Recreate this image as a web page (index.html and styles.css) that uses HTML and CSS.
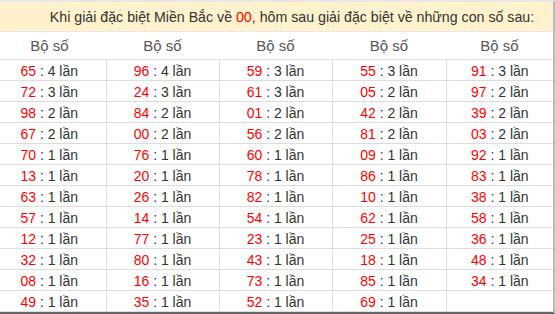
FILE: index.html
```html
<!DOCTYPE html>
<html>
<head>
<meta charset="utf-8">
<link rel="stylesheet" href="styles.css">
</head>
<body>
<div class="wrap">
<table class="stats">
<colgroup><col class="c1"><col class="c2"><col class="c3"><col class="c4"><col class="c5"></colgroup>
<thead>
<tr><th colspan="5" class="title">Khi giải đặc biệt Miền Bắc về <span class="red">00</span>, hôm sau giải đặc biệt về những con số sau:</th></tr>
<tr class="heads"><th>Bộ số</th><th>Bộ số</th><th>Bộ số</th><th>Bộ số</th><th>Bộ số</th></tr>
</thead>
<tbody>
<tr><td><span class="red">65</span> : 4 lần</td><td><span class="red">96</span> : 4 lần</td><td><span class="red">59</span> : 3 lần</td><td><span class="red">55</span> : 3 lần</td><td><span class="red">91</span> : 3 lần</td></tr>
<tr><td><span class="red">72</span> : 3 lần</td><td><span class="red">24</span> : 3 lần</td><td><span class="red">61</span> : 3 lần</td><td><span class="red">05</span> : 2 lần</td><td><span class="red">97</span> : 2 lần</td></tr>
<tr><td><span class="red">98</span> : 2 lần</td><td><span class="red">84</span> : 2 lần</td><td><span class="red">01</span> : 2 lần</td><td><span class="red">42</span> : 2 lần</td><td><span class="red">39</span> : 2 lần</td></tr>
<tr><td><span class="red">67</span> : 2 lần</td><td><span class="red">00</span> : 2 lần</td><td><span class="red">56</span> : 2 lần</td><td><span class="red">81</span> : 2 lần</td><td><span class="red">03</span> : 2 lần</td></tr>
<tr><td><span class="red">70</span> : 1 lần</td><td><span class="red">76</span> : 1 lần</td><td><span class="red">60</span> : 1 lần</td><td><span class="red">09</span> : 1 lần</td><td><span class="red">92</span> : 1 lần</td></tr>
<tr><td><span class="red">13</span> : 1 lần</td><td><span class="red">20</span> : 1 lần</td><td><span class="red">78</span> : 1 lần</td><td><span class="red">86</span> : 1 lần</td><td><span class="red">83</span> : 1 lần</td></tr>
<tr><td><span class="red">63</span> : 1 lần</td><td><span class="red">26</span> : 1 lần</td><td><span class="red">82</span> : 1 lần</td><td><span class="red">10</span> : 1 lần</td><td><span class="red">38</span> : 1 lần</td></tr>
<tr><td><span class="red">57</span> : 1 lần</td><td><span class="red">14</span> : 1 lần</td><td><span class="red">54</span> : 1 lần</td><td><span class="red">62</span> : 1 lần</td><td><span class="red">58</span> : 1 lần</td></tr>
<tr><td><span class="red">12</span> : 1 lần</td><td><span class="red">77</span> : 1 lần</td><td><span class="red">23</span> : 1 lần</td><td><span class="red">25</span> : 1 lần</td><td><span class="red">36</span> : 1 lần</td></tr>
<tr><td><span class="red">32</span> : 1 lần</td><td><span class="red">80</span> : 1 lần</td><td><span class="red">43</span> : 1 lần</td><td><span class="red">18</span> : 1 lần</td><td><span class="red">48</span> : 1 lần</td></tr>
<tr><td><span class="red">08</span> : 1 lần</td><td><span class="red">16</span> : 1 lần</td><td><span class="red">73</span> : 1 lần</td><td><span class="red">85</span> : 1 lần</td><td><span class="red">34</span> : 1 lần</td></tr>
<tr><td><span class="red">49</span> : 1 lần</td><td><span class="red">35</span> : 1 lần</td><td><span class="red">52</span> : 1 lần</td><td><span class="red">69</span> : 1 lần</td><td></td></tr>
</tbody>
</table>
</div>
</body>
</html>
```

FILE: styles.css
```css
html, body {
  margin: 0;
  padding: 0;
  background: #fff;
  overflow: hidden;
}
.wrap {
  width: 562px;
  height: 314px;
  margin-left: -7px;
  overflow: hidden;
  border-top: 2px solid #e6e6e6;
  border-bottom: 2px solid #666;
  border-right: 2px solid #bbb;
  box-sizing: border-box;
}
.stats {
  width: 560px;
  border-collapse: collapse;
  table-layout: fixed;
  font-family: "Liberation Sans", Arial, sans-serif;
  color: #333;
}
.c1, .c2, .c3 { width: 113px; }
.c4 { width: 114px; }
.c5 { width: 107px; }
.stats th, .stats td {
  padding: 0;
  text-align: center;
  font-weight: normal;
}
.stats .title {
  background: #fff2cc;
  height: 29px;
  font-size: 14.2px;
  padding-left: 38px;
  border-bottom: 1px solid #e8e8e8;
}
.heads th {
  height: 27px;
  font-size: 15px;
  color: #555;
  border-bottom: 1px solid #ddd;
}
.stats td {
  height: 19px;
  padding-top: 1px;
  font-size: 14px;
  border-bottom: 1px solid #ddd;
  border-left: 1px solid #ddd;
}
.stats td:first-child {
  border-left: none;
}
.red {
  color: #f00;
}
```
